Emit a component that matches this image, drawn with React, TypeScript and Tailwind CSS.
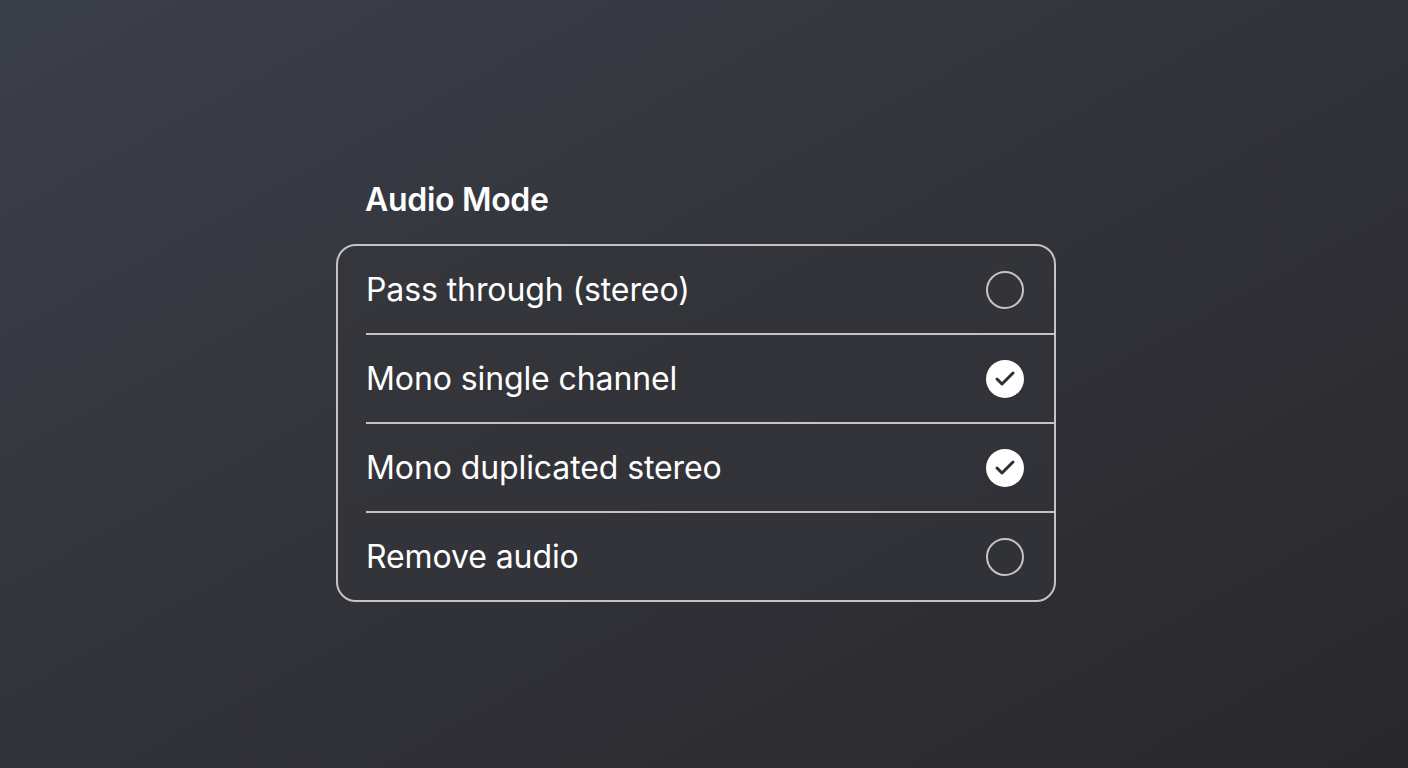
import { Check } from "lucide-react";

const options = [
  { label: "Pass through (stereo)", checked: false },
  { label: "Mono single channel", checked: true },
  { label: "Mono duplicated stereo", checked: true },
  { label: "Remove audio", checked: false },
];

export default function App() {
  return (
    <div className="flex h-[768px] w-full bg-gradient-to-br from-[#3b3f4a] via-[#323339] to-[#28282c] font-['Inter',sans-serif] text-white">
      <div className="ml-[336px] mt-[180px] w-[720px]">
        <h2 className="pl-[29px] text-[32px] font-semibold leading-[40px] tracking-[-0.3px]">
          Audio Mode
        </h2>
        <div className="mt-[24px] overflow-hidden rounded-[20px] border-2 border-[#c4c4c6] bg-[#34353a]/60">
          {options.map((o, i) => (
            <div
              key={o.label}
              className={
                "ml-[28px] flex items-center justify-between pr-[30px] " +
                (i > 0 ? "h-[89px] border-t-2 border-[#c4c4c6]" : "h-[87px]")
              }
            >
              <span className="text-[32px] tracking-[-0.1px]">{o.label}</span>
              {o.checked ? (
                <span className="grid h-[38px] w-[38px] place-items-center rounded-full bg-white text-[#2e2f33]">
                  <Check className="h-[24px] w-[24px]" strokeWidth={3} />
                </span>
              ) : (
                <span className="h-[38px] w-[38px] rounded-full border-2 border-[#c4c4c6]" />
              )}
            </div>
          ))}
        </div>
      </div>
    </div>
  );
}
